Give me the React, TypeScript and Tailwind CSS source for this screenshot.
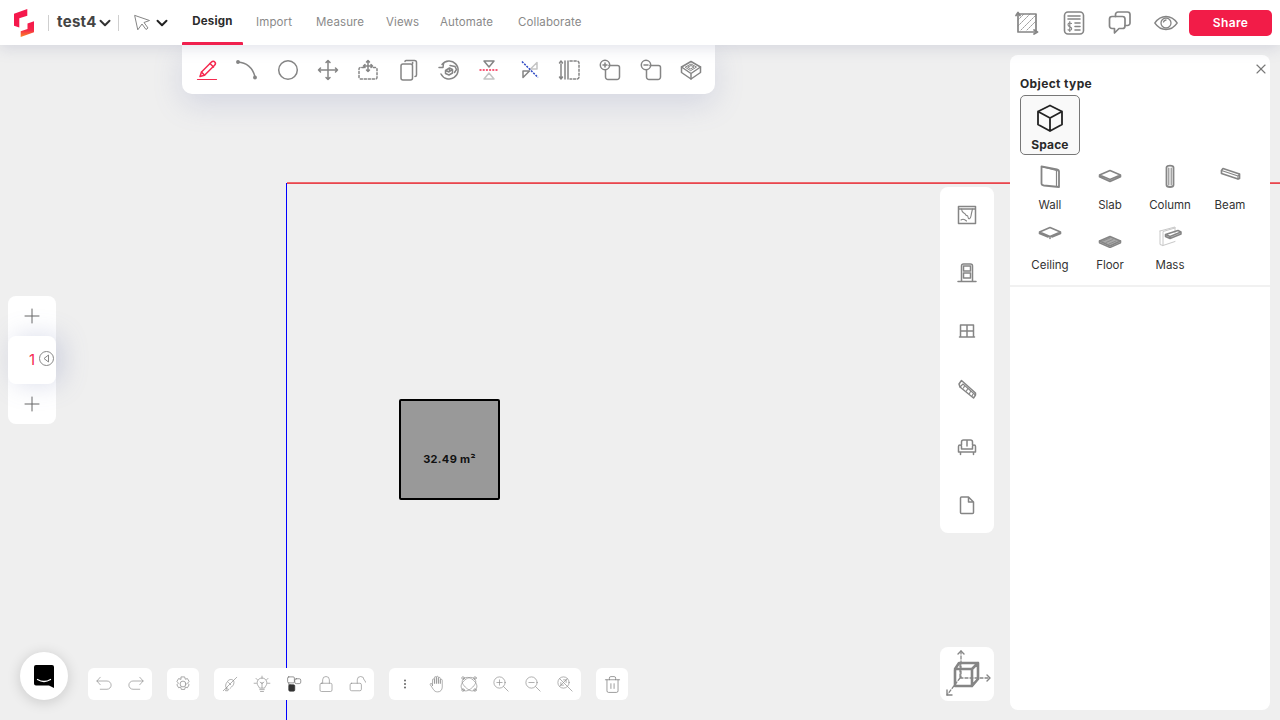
import React from 'react'
import { ChevronDown, Plus, X, Trash2 } from 'lucide-react'

const Ico = ({ size = 24, vb = 24, w = 1.5, color = '#858585', children }: { size?: number; vb?: number; w?: number; color?: string; children: React.ReactNode }) => (
  <svg width={size} height={size} viewBox={`0 0 ${vb} ${vb}`} fill="none" stroke={color} strokeWidth={w} strokeLinecap="round" strokeLinejoin="round" className="shrink-0">
    {children}
  </svg>
)

const Logo = () => (
  <svg width="20" height="28" viewBox="0 0 20 28" className="shrink-0">
    <defs>
      <linearGradient id="lg" x1="0" y1="0" x2="0" y2="1">
        <stop offset="0" stopColor="#f5184c" />
        <stop offset="0.55" stopColor="#f5264a" />
        <stop offset="1" stopColor="#fb8a24" />
      </linearGradient>
    </defs>
    <path d="M0 4.700 13.300 0V6.700L5.300 9.300V18.500L0 16.700Z" fill="#f5184c" />
    <path d="M20 12.300V23.300L6.700 28V22.300L13.500 20V14.500Z" fill="url(#lg)" />
  </svg>
)

const toolIcons: React.ReactNode[] = [
  <Ico color="#f5294f" key="pen">
    <path d="M5 18.500 6.500 14 16.500 4c1-1 2.500-1 3.300 0 .8.900.7 2.300-.2 3.200L9.500 17.300Z" />
    <path d="M15 5.500 18.500 9M6.500 14l3 3.300" />
    <path d="M2.500 21.500h19" strokeWidth="1.200" />
  </Ico>,
  <Ico key="arc">
    <path d="M3 4c8 .5 15 5.500 17 15" />
    <circle cx="3" cy="4" r="1.200" fill="#858585" />
    <circle cx="20" cy="19.500" r="1.200" fill="#858585" />
  </Ico>,
  <Ico key="circle">
    <circle cx="12" cy="12" r="9.300" />
  </Ico>,
  <Ico key="move">
    <path d="M12 2.500v19M2.500 12h19M10 4.500l2-2 2 2M10 19.500l2 2 2-2M4.500 10l-2 2 2 2M19.500 10l2 2-2 2" />
  </Ico>,
  <Ico key="move-box">
    <path d="M8 9.500H4.500a1.500 1.500 0 0 0-1.500 1.500v8.500A1.500 1.500 0 0 0 4.500 21h15a1.500 1.500 0 0 0 1.500-1.500V11a1.500 1.500 0 0 0-1.500-1.500H16" strokeDasharray="2.200 1.800" />
    <path d="M12 2.500v11M7.500 8h9M10.500 4l1.500-1.500L13.500 4M10.500 12l1.500 1.500 1.500-1.500M9 6.500 7.500 8 9 9.500M15 6.500 16.500 8 15 9.500" />
  </Ico>,
  <Ico key="copy">
    <rect x="4" y="6" width="11.500" height="16" rx="2" />
    <path d="M8 3.500C8 3 8.500 2.500 9 2.500h8.500c1.200 0 2 .8 2 2V17c0 1-.5 1.500-1.500 1.500M15.500 6c0-1 .5-1.500 0-1.500" />
  </Ico>,
  <Ico key="rotate">
    <path d="M5 6.500A9 9 0 1 1 4 16" />
    <path d="M2 9.500h4l.5-4" />
    <path d="M8.500 12.500l4-2.500 3 1.500v3.500l-3.500 2-3.500-1.500ZM12.500 10v3.500M8.500 12.500l3.500 1.500 3.500-2.500" />
    <path d="M13 7.500l5 1 1.500 3-2 3" />
  </Ico>,
  <Ico key="mirror-h">
    <path d="M7 3h10l-5 6Z" />
    <path d="M7 21h10l-5-6Z" stroke="#c4c4c4" />
    <path d="M2.500 12h19" stroke="#f5294f" strokeDasharray="2 1.200" strokeLinecap="butt" />
  </Ico>,
  <Ico key="mirror-d">
    <path d="M19 4.500v6.500h-6.500Z" stroke="#c4c4c4" />
    <path d="M5 19.500V13h6.500Z" />
    <path d="M4 3.500l16 16" stroke="#2a46c4" strokeDasharray="2 1.200" strokeLinecap="butt" />
  </Ico>,
  <Ico key="split">
    <path d="M3 6v15M1.500 5l1.500-2 1.500 2M1.500 19l1.500 2 1.500-2" />
    <path d="M7 3v18M10 3v18" />
    <path d="M12 3h7a2 2 0 0 1 2 2v14a2 2 0 0 1-2 2h-7" strokeDasharray="2.200 1.800" />
  </Ico>,
  <Ico key="add">
    <path d="M11 7.500h8.500a2 2 0 0 1 2 2V19a2.500 2.500 0 0 1-2.500 2.500h-9A2.500 2.500 0 0 1 7.500 19v-7" />
    <circle cx="7" cy="7" r="4.700" />
    <path d="M7 5v4M5 7h4" />
  </Ico>,
  <Ico key="subtract">
    <path d="M11 7.500h8.500a2 2 0 0 1 2 2V19a2.500 2.500 0 0 1-2.500 2.500h-9A2.500 2.500 0 0 1 7.500 19v-7" />
    <circle cx="7" cy="7" r="4.700" />
    <path d="M5 7h4" />
  </Ico>,
  <Ico key="surface">
    <path d="M2.500 9 12 3.500 21.500 9v5.500L12 21 2.500 14.500Z" />
    <path d="M2.500 9 12 15.500 21.500 9M12 15.500V21" />
    <path d="M6.500 9 12 6l5.500 3-5.500 3.500ZM9 9l3-1.500L15 9l-3 1.700Z" strokeWidth="1" />
  </Ico>,
]

const objectTypes = [
  {
    name: 'Wall',
    icon: (
      <Ico w={1.800}>
        <path d="M3.500 2.500 19 5.500c1 .2 2 .8 2 2V23L6 21.500c-1.500-.2-2.500-.8-2.500-2Z" />
        <path d="M3.500 2.500 18.500 6.500V22.500M18.500 6.500 21 7" strokeWidth="1.200" />
      </Ico>
    ),
  },
  {
    name: 'Slab',
    icon: (
      <Ico w={1.600}>
        <path d="M1.500 11 12 6.500 22.500 11 12 15.500ZM1.500 11v1.700L12 17.500l10.500-4.800V11M12 15.500v2" />
      </Ico>
    ),
  },
  {
    name: 'Column',
    icon: (
      <Ico w={1.800}>
        <path d="M8.500 3.500c0-2.500 7-2.500 7 0V21c0 1.500-1 2-3.500 2S8.500 22.500 8.500 21Z" />
        <path d="M10.800 4v17M13.200 4v17" strokeWidth="1.100" />
      </Ico>
    ),
  },
  {
    name: 'Beam',
    icon: (
      <Ico w={1.700}>
        <path d="M3.500 6.500 5 4.500 21.500 10v4.500L20 15 3.500 9.500Z" />
        <path d="M3.500 6.500 20 12v3M20 12l1.500-2" strokeWidth="1.200" />
      </Ico>
    ),
  },
  {
    name: 'Ceiling',
    icon: (
      <Ico w={1.600}>
        <g transform="translate(0 -3)">
          <path d="M1.500 11 12 6.500 22.500 11 12 15.500ZM1.500 11v1.500L10 16M22.500 11v1.500L14 16M12 15.500v2" />
        </g>
      </Ico>
    ),
  },
  {
    name: 'Floor',
    icon: (
      <Ico>
        <g transform="translate(0 4)">
          <path d="M1.500 13 12 8.500 22.500 13 12 18Z" fill="#aaa" />
          <path d="M1.500 13v1.700L12 19.500l10.500-4.800V13" />
          <path d="M5 13l7-3M8 14.500l7-3M11 16l7-3" strokeWidth="0.800" />
        </g>
      </Ico>
    ),
  },
  {
    name: 'Mass',
    icon: (
      <Ico>
        <path d="M2 7 17 3v6M2 7v13.500l3 1V7.500L17 4M5 21.500l12-4" stroke="#c8c8c8" strokeWidth="1" />
        <path d="M7.500 10.500 20 6.500l3 1.500v2L12 14.500 7.500 12.500ZM7.500 10.500 12 12.500 23 8M12 12.500v2" />
      </Ico>
    ),
  },
]

const sideIcons = [
  <Ico key="a" size={20} vb={20}>
    <path d="M1.500 1.500h17v17h-17ZM1.500 4h17" />
    <path d="M4.500 4c.5 5 3 3 4 5.500S10.500 9 11 12s2.500 2 3-1 1-5 1.500-7M4 15c2-1.500 4-.5 5.500 1" strokeWidth="1.100" />
  </Ico>,
  <Ico key="b" size={20} vb={20}>
    <path d="M1 18.500h18M4.500 18.500V3a2 2 0 0 1 2-2h7a2 2 0 0 1 2 2v15.500" />
    <rect x="6.500" y="3" width="7" height="5" />
    <rect x="6.500" y="10" width="7" height="5" />
  </Ico>,
  <Ico key="c" size={20} vb={20}>
    <path d="M3.500 4h13v12h-13ZM10 4v12M3.500 10h13M2.500 16h15" />
  </Ico>,
  <Ico key="d" size={20} vb={20}>
    <path d="M2 5 4.500 1.500l14 12.500v2l-2 3L3 8Z" />
    <path d="M3 8l3-3 12.500 11M6.500 9l1-2M9.500 12l1-2M12.500 14.500l1-2M15 17l1-2" strokeWidth="1.100" />
  </Ico>,
  <Ico key="e" size={20} vb={20}>
    <path d="M4.500 8V5a2 2 0 0 1 2-2h7a2 2 0 0 1 2 2v3M10 3v6" />
    <path d="M1.500 9.500a1.500 1.500 0 0 1 3 0v2.500h11V9.500a1.500 1.500 0 0 1 3 0V15h-17ZM3.500 15v2.500M16.500 15v2.500" />
  </Ico>,
  <Ico key="f" size={20} vb={20}>
    <path d="M3.500 3a1 1 0 0 1 1-1h7l5 5v10.500a1 1 0 0 1-1 1h-11a1 1 0 0 1-1-1ZM11.500 2v5h5" />
  </Ico>,
]

const BarBtn = ({ children }: { children: React.ReactNode }) => (
  <div className="w-8 h-8 flex items-center justify-center">{children}</div>
)

const Bar = ({ children }: { children: React.ReactNode }) => (
  <div className="flex bg-white rounded-md">{children}</div>
)

const bb = { size: 18, w: 0.9, color: '#8a8a8a' }

export default function App() {
  return (
    <div className="relative w-[1280px] h-[720px] overflow-hidden bg-[#efefef] font-['Inter','Liberation_Sans',sans-serif]">
      {/* Header */}
      <header className="relative z-20 h-[45px] bg-white flex items-center shadow-[0_3px_14px_rgba(120,125,160,0.22)]">
        <div className="ml-[14px]"><Logo /></div>
        <div className="ml-[14px] w-px h-4 bg-[#cfcfcf]" />
        <div className="ml-2 w-[39px] text-[15px] font-bold text-[#444] tracking-[0.02em]">test4</div>
        <ChevronDown size={18} strokeWidth={2.600} className="text-[#333]" />
        <div className="ml-1 w-px h-4 bg-[#cfcfcf]" />
        <div className="ml-[15px]">
          <Ico size={17} vb={17} w={1}>
            <path d="M1 1.500 15.500 6.500l-5.500 2 4 5.500-2 1.500-4-5.500L4 15.500Z" />
          </Ico>
        </div>
        <ChevronDown size={18} strokeWidth={2.600} className="ml-[2px] text-[#222]" />
        <nav className="relative ml-[11px] h-full w-[420px] flex items-center text-[11.5px] text-[#8a8a8a] tracking-[0.01em]">
          <div className="relative w-[61px] h-full flex items-center justify-center">
            <span className="font-bold text-[#2b2b2b] tracking-[0.02em] mb-[2px]">Design</span>
            <div className="absolute left-0 right-0 bottom-0 h-[3px] bg-[#f0204e] rounded-t-[1px]" />
          </div>
          <span className="ml-[13px] w-[60px]">Import</span>
          <span className="w-[70px]">Measure</span>
          <span className="w-[54px]">Views</span>
          <span className="w-[78px]">Automate</span>
          <span>Collaborate</span>
        </nav>
        <div className="ml-auto flex items-center pr-2">
          <Ico size={26} vb={26} w={1.700}>
            <path d="M4 4h18v18H4Z" />
            <path d="M4 10 10 4M4 16 16 4M7 20 22 5M13 20l9-9" strokeWidth="0.800" strokeDasharray="1.800 1.200" />
            <path d="M2 5.500 4 2.500l2 3M20 20l3.500 2-3.500 2" />
          </Ico>
          <div className="ml-[21px]">
            <Ico size={26} vb={26} w={1.600}>
              <rect x="3.500" y="2" width="19" height="22" rx="3.500" />
              <path d="M7 6h12M7 9h12M14 13h5M14 16.500h5M14 20h5" />
              <path d="M10.500 13.500C9 12.500 7 13 7 14.800c0 2.500 3.700 1.500 3.700 4 0 1.700-2.200 2-3.700 1M8.800 11.500v10" strokeWidth="1.100" />
            </Ico>
          </div>
          <div className="ml-5">
            <Ico size={26} vb={26} w={1.700}>
              <path d="M8.500 6.500V4.500A2.500 2.500 0 0 1 11 2h9.500A2.500 2.500 0 0 1 23 4.500V13a2.500 2.500 0 0 1-2.500 2.500H18" />
              <path d="M5 6.500h10.500A2.500 2.500 0 0 1 18 9v7a2.500 2.500 0 0 1-2.500 2.500H12L7.500 23v-4.500H5A2.500 2.500 0 0 1 2.500 16V9A2.500 2.500 0 0 1 5 6.500Z" />
            </Ico>
          </div>
          <div className="ml-[21px]">
            <Ico size={24} vb={24} w={1.300}>
              <path d="M.8 12C4 7.500 8 5.500 12 5.500s8 2 11.200 6.500C20 16.500 16 18.500 12 18.500S4 16.500.8 12Z" />
              <circle cx="12" cy="12" r="5" />
              <path d="M9.500 11a2.800 2.800 0 0 1 2.500-2" />
            </Ico>
          </div>
          <button className="ml-[11px] w-[83px] h-[26px] rounded-[5px] bg-[#f21c48] text-white text-[12px] font-semibold tracking-[0.03em]">Share</button>
        </div>
      </header>

      {/* Canvas axes */}
      <div className="absolute left-[286px] top-[183px] w-px bottom-0 bg-[#0000ff]" />
      <div className="absolute left-[287px] top-[182px] right-0 h-[2px] bg-[#ec6a6e] border-b border-[#e8464e]" />
      <div className="absolute left-[399px] top-[399px] w-[101px] h-[101px] bg-[#999999] border-2 border-black rounded-[2px] flex items-center justify-center">
        <span className="mt-[20px] text-[11px] font-bold text-[#111] tracking-[0.03em]">32.49 m²</span>
      </div>

      {/* Draw toolbar */}
      <div className="absolute z-10 left-[182px] top-[45px] w-[533px] h-[49px] bg-white rounded-b-[10px] pl-[13px] pr-[12px] flex items-center justify-between shadow-[0_10px_30px_rgba(110,120,175,0.2)]">
        {toolIcons}
      </div>

      {/* Level picker */}
      <div className="absolute left-2 top-[296px] w-12 h-32 bg-white rounded-lg flex flex-col items-center">
        <div className="h-10 flex items-center justify-center"><Plus size={24} strokeWidth={1} className="text-[#666]" /></div>
        <div className="relative w-full h-12 bg-white rounded-lg flex items-center justify-center shadow-[6px_0_26px_rgba(110,120,175,0.26)]">
          <span className="text-[15px] text-[#f5294f]">1</span>
          <div className="absolute left-[31px] top-[15px] w-[15px] h-[15px] rounded-full border border-[#888] bg-white flex items-center justify-center">
            <svg width="7" height="9" viewBox="0 0 7 9" fill="none" stroke="#888" strokeWidth="1"><path d="M5.500 1v7L1 4.500Z" /></svg>
          </div>
        </div>
        <div className="h-10 flex items-center justify-center"><Plus size={24} strokeWidth={1} className="text-[#666]" /></div>
      </div>

      {/* Element toolbar */}
      <div className="absolute left-[940px] top-[187px] w-[54px] h-[346px] bg-white rounded-lg flex flex-col items-center justify-between py-[18px]">
        {sideIcons}
      </div>

      {/* View cube */}
      <div className="absolute left-[940px] top-[647px] w-[54px] h-[54px] bg-white rounded-lg">
        <Ico size={54} vb={54} w={1.500}>
          <path d="M15 22h17v17H15ZM15 22l4-6h19v16l-6 7M32 22l6-6" strokeWidth="2.600" />
          <path d="M20 17v14M21 4v27M20 31h30M20 31 7 48" strokeDasharray="3 2" strokeWidth="1.300" />
          <path d="M18 7l3-3 3 3M47 28l3 3-3 3M7 43v5h5" strokeWidth="1.400" />
        </Ico>
      </div>

      {/* Object panel */}
      <aside className="absolute z-10 left-[1010px] top-[55px] w-[260px] h-[655px] bg-white rounded-lg">
        <X size={16} strokeWidth={1.700} className="absolute right-[1px] top-[6px] text-[#777]" />
        <div className="pt-[21px] px-[10px] text-[12px] font-bold text-[#2a2a2a] tracking-[0.03em] leading-[15px]">Object type</div>
        <div className="mt-[4px] ml-[10px] w-[60px] h-[60px] border border-[#777] rounded-[5px] bg-[#f9f9f9] flex flex-col items-center pt-[7px]">
          <Ico size={30} vb={30} w={1.800} color="#222">
            <path d="M15 2.500 27 8.500v13L15 28 3 21.500v-13ZM3 8.500l12 6.500 12-6.500M15 15v13" />
          </Ico>
          <span className="text-[12px] font-bold text-[#2a2a2a] tracking-[0.01em] leading-[16px] mt-[4px]">Space</span>
        </div>
        <div className="ml-[10px] mt-[6px] grid grid-cols-4 w-[240px]">
          {objectTypes.map((t) => (
            <div key={t.name} className="h-[60px] flex flex-col items-center pt-[3px] text-[11.5px] text-[#333]">
              {t.icon}
              <span className="mt-[9px] leading-[16px]">{t.name}</span>
            </div>
          ))}
        </div>
        <div className="mt-[4px] h-[2px] bg-[#f1f1f1]" />
      </aside>

      {/* Chat bubble */}
      <div className="absolute left-5 top-[652px] w-12 h-12 rounded-full bg-white flex items-center justify-center shadow-[0_2px_14px_rgba(0,0,0,0.16)]">
        <svg width="22" height="25" viewBox="0 0 22 25">
          <path d="M3 1h16a2 2 0 0 1 2 2v21l-5-2.500H3a2 2 0 0 1-2-2V3a2 2 0 0 1 2-2Z" fill="#000" />
          <path d="M4.500 15.500c4 2.500 9 2.500 13 0" fill="none" stroke="#fff" strokeWidth="1.300" strokeLinecap="round" />
        </svg>
      </div>

      {/* Bottom toolbars */}
      <div className="absolute left-[88px] top-[668px] flex gap-[15px]">
        <Bar>
          <BarBtn>
            <Ico {...bb}><path d="M7 3 2.500 8 7 13M2.500 8H16a5 5 0 0 1 0 11H7" /></Ico>
          </BarBtn>
          <BarBtn>
            <Ico {...bb}><path d="M17 3l4.500 5-4.500 5M21.500 8H8a5 5 0 0 0 0 11h9" /></Ico>
          </BarBtn>
        </Bar>
        <Bar>
          <BarBtn>
            <Ico {...bb} size={20}>
              <circle cx="12" cy="12" r="3.500" />
              <path d="M10 2.500h4l.8 2.800 2.500-.8 2 3.400-1.800 2.100 1.800 2-2 3.500-2.500-.9-.8 2.900h-4l-.8-2.900-2.500.9-2-3.500 1.800-2-1.800-2.100 2-3.400 2.500.8Z" transform="translate(0 1)" />
            </Ico>
          </BarBtn>
        </Bar>
        <Bar>
          <BarBtn>
            <Ico {...bb}>
              <path d="M3 21 21 3" />
              <path d="M9 19c-3-1-3.500-5-2-8l3-4c3-2 6-1 7 1 1 3-.5 6-3 8l-2 2" />
              <path d="M8 17l-2 4h3l1-2M10 10l3 3" />
            </Ico>
          </BarBtn>
          <BarBtn>
            <Ico {...bb}>
              <path d="M12 1.500v3M4 4.500l2 2M20 4.500l-2 2M1.500 11h3M19.500 11h3" />
              <path d="M8.500 17c-.5-2-3-3-3-6.500a6.500 6.500 0 0 1 13 0c0 3.500-2.500 4.500-3 6.500ZM9 19.500h6M10 22h4M12 10v7M9.500 9.500l2.500 2 2.500-2" />
            </Ico>
          </BarBtn>
          <BarBtn>
            <Ico {...bb} color="#666">
              <rect x="3.500" y="2.500" width="9" height="8" rx="1.500" />
              <rect x="13" y="5" width="8" height="6.500" rx="2" />
              <rect x="5" y="13" width="8" height="8.500" rx="1.500" fill="#333" stroke="#333" />
              <path d="M5 10.500v3" />
            </Ico>
          </BarBtn>
          <BarBtn>
            <Ico {...bb}>
              <rect x="4" y="11" width="16" height="11" rx="2" />
              <path d="M7.500 11V6.500a4.500 4.500 0 0 1 9 0V11" />
            </Ico>
          </BarBtn>
          <BarBtn>
            <Ico {...bb}>
              <rect x="1.500" y="11" width="15" height="10" rx="2" />
              <path d="M11 11V6.500a4.500 4.500 0 0 1 9 0 3 3 0 0 1 2 3" />
            </Ico>
          </BarBtn>
        </Bar>
        <Bar>
          <BarBtn>
            <svg width="4" height="10" viewBox="0 0 4 10" fill="#666"><circle cx="2" cy="1.500" r="1" /><circle cx="2" cy="5" r="1" /><circle cx="2" cy="8.500" r="1" /></svg>
          </BarBtn>
          <BarBtn>
            <Ico {...bb}>
              <path d="M6 14V6.500a1.300 1.300 0 0 1 2.600 0V11M8.600 11V3.500a1.300 1.300 0 0 1 2.600 0V11M11.200 11V3a1.300 1.300 0 0 1 2.600 0v8M13.800 11V4.500a1.300 1.300 0 0 1 2.600 0V11M16.400 11V7a1.300 1.300 0 0 1 2.600 0v9c0 4-2.500 6.500-6 6.500-3 0-4.500-1-6-3.500l-4-6c-.5-1.500 1-2.500 2.200-1.300L6 14" />
            </Ico>
          </BarBtn>
          <BarBtn>
            <Ico {...bb}>
              <path d="M5 5c4-4 10-1 14 3s5 9 1 12-9 0-13-4-6-8-2-11Z" />
              <path d="M19 5c-4-4-10-1-14 3s-5 9-1 12 9 0 13-4 6-8 2-11Z" />
              <circle cx="4" cy="4" r="1.700" /><circle cx="20" cy="4" r="1.700" /><circle cx="4" cy="20" r="1.700" /><circle cx="20" cy="20" r="1.700" />
            </Ico>
          </BarBtn>
          <BarBtn>
            <Ico {...bb}>
              <circle cx="10" cy="10" r="7.500" />
              <path d="M10 6.500v7M6.500 10h7M15.500 15.500l6 6" />
            </Ico>
          </BarBtn>
          <BarBtn>
            <Ico {...bb}>
              <circle cx="10" cy="10" r="7.500" />
              <path d="M6.500 10h7M15.500 15.500l6 6" />
            </Ico>
          </BarBtn>
          <BarBtn>
            <Ico {...bb}>
              <circle cx="10" cy="10" r="7.500" />
              <path d="M5 5l10 10M15 5 5 15M10 6.500h3.500V10M10 13.500H6.500V10M15.500 15.500l6 6" />
            </Ico>
          </BarBtn>
        </Bar>
        <Bar>
          <BarBtn>
            <Trash2 size={19} strokeWidth={0.9} className="text-[#777]" />
          </BarBtn>
        </Bar>
      </div>
    </div>
  )
}
